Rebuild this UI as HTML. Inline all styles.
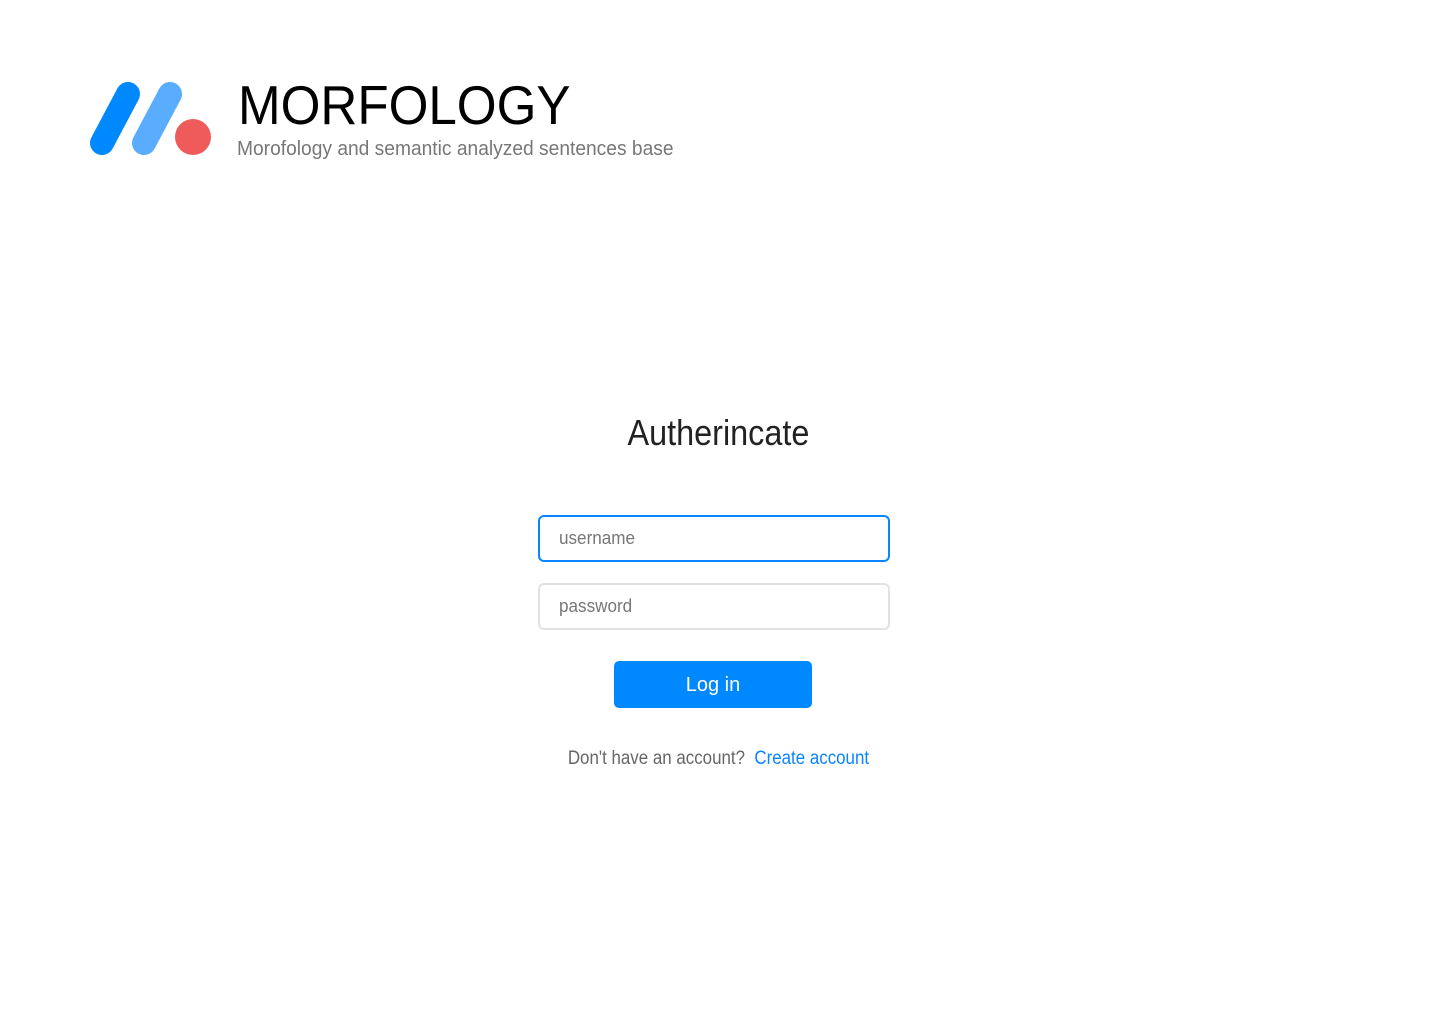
<!DOCTYPE html>
<html><head><meta charset="utf-8"><style>
html,body{margin:0;padding:0;background:#fff;width:1440px;height:1024px;overflow:hidden;font-family:"Liberation Sans",sans-serif;}
.abs{position:absolute;white-space:nowrap}
.inp{position:absolute;left:538px;width:348px;height:43px;border-radius:6px;box-sizing:content-box;}
.ph{position:absolute;left:19px;top:11px;font-size:18px;color:#777;transform:scaleX(0.95);transform-origin:left;}
</style></head><body>
<svg class="abs" style="left:0;top:0" width="240" height="180">
<line x1="128" y1="94" x2="102" y2="143" stroke="#0088ff" stroke-width="24" stroke-linecap="round"/>
<line x1="170" y1="94" x2="144" y2="143" stroke="#5aacff" stroke-width="24" stroke-linecap="round"/>
<circle cx="193" cy="137" r="18" fill="#ef5a5a"/>
</svg>
<div class="abs" style="left:238px;top:72px;font-size:55px;color:#000;line-height:66px;transform:scaleX(0.93);transform-origin:left;">MORFOLOGY</div>
<div class="abs" style="left:237px;top:136px;font-size:20px;color:#777;line-height:26px;transform:scaleX(0.96);transform-origin:left;">Morofology and semantic analyzed sentences base</div>
<div class="abs" style="left:0;width:1437px;text-align:center;top:410px;font-size:36px;color:#222;line-height:46px;transform:scaleX(0.9);transform-origin:718px 0;">Autherincate</div>
<div class="inp" style="top:515px;border:2px solid #0a84ff;"><span class="ph">username</span></div>
<div class="inp" style="top:583px;border:2px solid #e2e2e2;"><span class="ph">password</span></div>
<div class="abs" style="left:614px;top:661px;width:198px;height:47px;background:#0088ff;border-radius:5px;color:#fff;font-size:20px;text-align:center;line-height:49px;">Log in</div>
<div class="abs" style="left:0;width:1437px;text-align:center;top:747px;font-size:19px;line-height:24px;color:#666;transform:scaleX(0.89);transform-origin:718px 0;">Don't have an account?&nbsp; <span style="color:#0a84ff">Create account</span></div>
</body></html>
